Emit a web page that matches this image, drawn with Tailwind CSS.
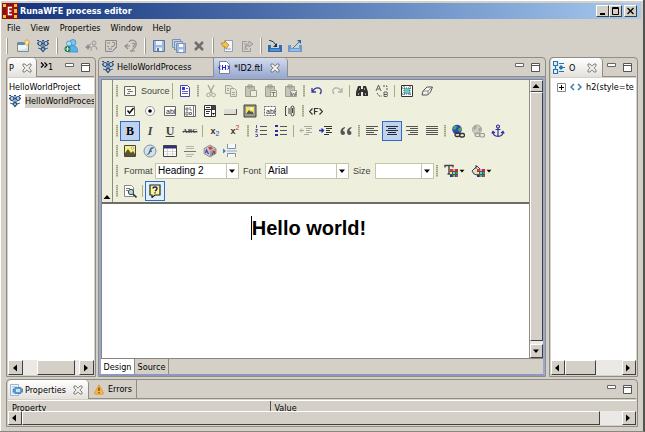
<!DOCTYPE html>
<html lang="en">
<head>
    <meta charset="UTF-8">
    <meta name="viewport" content="width=device-width, initial-scale=1.0">
    <title>RunaWFE process editor</title>
    <script src="https://cdn.jsdelivr.net/npm/@tailwindcss/browser@4"></script>
</head>
<body class="h-screen overflow-hidden bg-[#d4d0c8] font-['DejaVu_Sans_Condensed','DejaVu_Sans',sans-serif] text-[9px] leading-3 text-black">

<!-- icon sprite -->
<svg class="hidden" xmlns="http://www.w3.org/2000/svg">
    <symbol id="close" viewBox="0 0 10 10"><path d="M1 1h2l2 2.2L7 1h2v2L6.8 5 9 7v2H7L5 6.8 3 9H1V7l2.2-2L1 3z" fill="#f4f3f0" stroke="#666" stroke-width=".8"/></symbol>
    <symbol id="minview" viewBox="0 0 10 5"><path d="M.5 .5h8v3h-8z" fill="#fff" stroke="#666"/></symbol>
    <symbol id="maxview" viewBox="0 0 9 9"><path d="M.5 .5h8v8h-8z" fill="#fff" stroke="#555"/><path d="M0 2.500h9" stroke="#555"/></symbol>
    <symbol id="arrow-left" viewBox="0 0 10 10"><path d="M3 5l4-3.500v7z"/></symbol>
    <symbol id="arrow-right" viewBox="0 0 10 10"><path d="M7 5L3 1.500v7z"/></symbol>
    <symbol id="arrow-up" viewBox="0 0 10 10"><path d="M5 3l3.500 4h-7z"/></symbol>
    <symbol id="arrow-down" viewBox="0 0 10 10"><path d="M5 7L2 3.500h6z"/></symbol>
    <symbol id="process" viewBox="0 0 14 14">
        <path d="M1 4.500h12M7 2v10M4 6l3 4 3-4M2 9l3 1M12 9l-3 1" stroke="#3a6594" fill="none"/>
        <g fill="#b9d3ea" stroke="#2a4f7a" stroke-width="1.200"><circle cx="4" cy="4.500" r="2"/><circle cx="10" cy="4.500" r="2"/><path d="M7 8l2 2-2 2.500L5 10z"/></g>
        <path d="M1 1.500h2M11 1.500h2M6 1.500h2" stroke="#2a4f7a"/>
    </symbol>
    <symbol id="newproject" viewBox="0 0 14 14">
        <path d="M1.500 3.500h11v9h-11z" fill="#eef6fb" stroke="#8a8878"/><path d="M2 4h7v2H2z" fill="#4d8fd0"/><path d="M2 10q6 2 10-3v5H2z" fill="#cfe3f2"/>
        <path d="M11 0v7M7.500 3.500h6.500M8.500 1l5 5M13.500 1l-5 5" stroke="#e9a820"/><circle cx="11" cy="3.500" r="1.300" fill="#fff7c0"/>
    </symbol>
    <symbol id="users" viewBox="0 0 14 14">
        <circle cx="9" cy="3.500" r="3" fill="#7cc4ee" stroke="#2b87c4" stroke-width=".7"/><circle cx="5" cy="4.500" r="2.500" fill="#a9dcf5" stroke="#2b87c4" stroke-width=".7"/>
        <path d="M4 13q-1-6 5-6.500 5 .5 4.800 6.500z" fill="#58b4e8" stroke="#2b87c4" stroke-width=".7"/><circle cx="3.500" cy="10" r="3" fill="#207a50"/><path d="M3.500 8v4M1.500 10h4" stroke="#d2f4dc"/>
    </symbol>
    <symbol id="adduser" viewBox="0 0 14 14" fill="none" stroke="#999"><circle cx="10" cy="4" r="2"/><path d="M7 12q0-5 3-5t3 4M4 5v6M1 8h6M5 6l2-1"/><circle cx="4" cy="8" r="1.500" fill="#888"/></symbol>
    <symbol id="board" viewBox="0 0 14 14" fill="none" stroke="#8c8c8c"><path d="M1.500 1.500h11v6l-4 5h-7zM3 4h3M8 3l3 1-1 3-3 1M3 7l2 1M4 10h4M9 12l4-4"/></symbol>
    <symbol id="userundo" viewBox="0 0 14 14" fill="none" stroke="#909090"><path d="M5 3q2-3 6-1 3 4-1 7l-3 4M1 7h5M4 5L1 7l3 3M8 4l3 1-2 3M6 12h5" stroke-width="1.200"/></symbol>
    <symbol id="save" viewBox="0 0 14 14"><path d="M1.500 1.500h11v11h-11z" fill="#9fb8db" stroke="#5877a8"/><path d="M4 2h6v4H4zM4 8.500h6V12H4z" fill="#eef3fa"/><path d="M5 9h2v3H5z" fill="#5877a8"/></symbol>
    <symbol id="saveall" viewBox="0 0 14 14" fill="#c5d4e8" stroke="#7690b8"><path d="M.5 .5h8v8h-8z"/><path d="M2.500 2.500h8v8h-8z"/><path d="M4.500 4.500h9v9h-9z" fill="#9fb8db"/><path d="M7 5h4v3H7zM7 10.500h4V13H7z" fill="#fff" stroke="none"/></symbol>
    <symbol id="delete" viewBox="0 0 14 14"><path d="M3 3l8 8M11 3l-8 8" stroke="#707070" stroke-width="2.600"/></symbol>
    <symbol id="import" viewBox="0 0 14 14"><path d="M4.500 1.500h8v11h-8z" fill="#f2f5fa" stroke="#8fa3bd"/><path d="M6 10h5" stroke="#8fa3bd"/><path d="M1 4h3l1-2 4 4-3 4-1-2q-3 0-4-4z" fill="#f5c04a" stroke="#b7851f" stroke-width=".8"/></symbol>
    <symbol id="export" viewBox="0 0 14 14" fill="none" stroke="#999"><path d="M7 2.500H2.500v10h8V9M4 5h2M4 10h4"/><path d="M5 9q0-4 4-5V2l4 3-4 3V6.500Q6 6.500 5 9z" fill="#c4c2bd"/></symbol>
    <symbol id="trayin" viewBox="0 0 14 12"><path d="M0 5h3v3h8V5h3v7H0z" fill="#2f6db5"/><path d="M2 10h10" stroke="#78b7ea"/><path d="M1 0q5 1 7 5" stroke="#234" fill="none"/><path d="M9 3v4H5z" fill="#136"/></symbol>
    <symbol id="trayout" viewBox="0 0 14 12"><path d="M0 5h3v3h8V5h3v7H0z" fill="#6c9bd0"/><path d="M2 10h10" stroke="#c4dcf2"/><path d="M5 8l6-6" stroke="#357ab8" fill="none"/><path d="M9 0h4v4z" fill="#2667a5"/></symbol>
    <symbol id="ftl" viewBox="0 0 12 13"><path d="M1.500 .5h7l3 3v9h-10z" fill="#fff" stroke="#7a7f9c"/><path d="M4.500 4v5M7.500 4v5M5 6.500h2M2.500 4.500L.8 6.500l1.700 2M9.500 4.500l1.700 2-1.700 2" stroke="#2a2ab8" fill="none" stroke-width="1.100"/></symbol>
    <symbol id="outline" viewBox="0 0 12 13" fill="#eaf5fd" stroke="#1e78b8"><path d="M.5 .5h4v4h-4zM.5 8.500h4v4h-4zM2.500 5v3M6 2.500h5M6 6.500h6M6 10.500h5" stroke-width="1.200"/><path d="M7 5h2v3H7z" fill="#1e78b8"/></symbol>
    <symbol id="props" viewBox="0 0 13 12"><path d="M.5 .5h8v11h-8z" fill="#eef4fb" stroke="#9db4d0"/><path d="M2 3h5M2 9h5" stroke="#9db4d0"/><path d="M3 5h2V3.500h6V5h2v3h-2v1.500H5V8H3z" fill="#5c9bd5" stroke="#3b78b5" stroke-width=".7"/><path d="M6 5h4v3H6z" fill="#cbe4f8"/></symbol>
    <symbol id="warn" viewBox="0 0 10 11"><path d="M5 .7L9.500 9q0 1.300-1 1.300h-7q-1 0-1-1.300z" fill="#f6b53c" stroke="#d9983c" stroke-width=".8"/><path d="M5 3.500v3.500M5 8v1.300" stroke="#6b3f00" stroke-width="1.200"/></symbol>

    <symbol id="source" viewBox="0 0 14 14"><path d="M1.500 2.500h11v9h-11z" fill="#f7f7ee" stroke="#666"/><path d="M4 5.500h4M5 7.500h5M4 9.500h3" stroke="#777"/></symbol>
    <symbol id="template" viewBox="0 0 14 14"><path d="M2.500 1.500h7l2 2v9h-9z" fill="#fff" stroke="#4646aa"/><path d="M4 3h3v3H4z" fill="#3535d5"/><path d="M8 4.500h2M4 7.500h6M4 9.500h6" stroke="#5b5bd8"/></symbol>
    <symbol id="cut" viewBox="0 0 14 14" fill="none" stroke="#a5a598"><path d="M4 1l4 8M10 1L6 9" stroke-width="1.300"/><circle cx="4.500" cy="11" r="1.800"/><circle cx="9.500" cy="11" r="1.800"/></symbol>
    <symbol id="copy" viewBox="0 0 14 14" fill="#e6e7d6" stroke="#a5a598"><path d="M1.500 1.500h5l2 2v6h-7z"/><path d="M6.500 4.500h4l2 2v6h-6zM8 8.500h3M8 10.500h3M3 4.500h2M3 6.500h2"/></symbol>
    <symbol id="paste" viewBox="0 0 14 14" fill="#c5c6b6" stroke="#a0a092"><path d="M1.500 2.500h9v10h-9zM4 1h4v3H4z"/><path d="M6.500 6.500h6v6h-6z" fill="#eeeede"/></symbol>
    <symbol id="undo" viewBox="0 0 14 14" fill="none" stroke="#3a3a9c"><path d="M2 4v4h4M2.500 7.500Q5 3 9 4q4 2 1 6" stroke-width="1.300"/></symbol>
    <symbol id="redo" viewBox="0 0 14 14" fill="none" stroke="#b2b2a5"><path d="M12 4v4H8M11.500 7.500Q9 3 5 4q-4 2-1 6" stroke-width="1.300"/></symbol>
    <symbol id="find" viewBox="0 0 14 14" fill="#333"><path d="M3 2h3v3h2V2h3l2 6v4H8V8H6v4H1V8z"/><path d="M3.500 9v2M10.500 9v2M4.500 4v2M9.500 4v2" stroke="#999"/></symbol>
    <symbol id="replace" viewBox="0 0 14 14" fill="none" stroke="#555"><path d="M1 7l2.500-6L6 7M2 5h3M9 8h3q1 1 0 2.500H9zM9 10.500h3q1 1 0 2H9z" stroke-width=".9"/><path d="M8 2h4v4M2 9l2 3h3" stroke-dasharray="2 1"/></symbol>
    <symbol id="selectall" viewBox="0 0 14 14"><path d="M1.500 1.500h11v11h-11z" fill="#fff" stroke="#333"/><path d="M4 4h6v6H4z" fill="#6cc8c2"/><path d="M4 2v10M10 2v10M2 4h10M2 10h10" stroke="#356" stroke-dasharray="1 1"/></symbol>
    <symbol id="eraser" viewBox="0 0 14 14"><path d="M7 3h5.500l-2 5-3 3H2l1-4z" fill="#f4f4ee" stroke="#555"/><path d="M3 7h5l4-4M8 7v4" stroke="#777" stroke-width=".8" fill="none"/></symbol>

    <symbol id="checkbox" viewBox="0 0 14 14"><path d="M2.500 2.500h9v9h-9z" fill="#fff" stroke="#666"/><path d="M4.500 6.500l2 2.500 4-5" fill="none" stroke="#111" stroke-width="1.600"/></symbol>
    <symbol id="radio" viewBox="0 0 14 14"><circle cx="7" cy="7" r="4.500" fill="#fff" stroke="#999"/><circle cx="7" cy="7" r="1.800"/></symbol>
    <symbol id="abl" viewBox="0 0 14 14"><path d="M1.500 2.500h11v9h-11z" fill="#fff" stroke="#666"/></symbol>
    <symbol id="textarea" viewBox="0 0 14 14"><path d="M1.500 1.500h11v11h-11z" fill="#fff" stroke="#666"/><path d="M10.500 2v10M3 4h2v2H3zM7 3v3h2M3 8h2v3H3zM6.500 8.500h2v2h-2z" stroke="#555" stroke-width=".8" fill="none"/></symbol>
    <symbol id="select" viewBox="0 0 14 14"><path d="M1.500 1.500h11v11h-11zM2 5.500h10M8.500 2v10" fill="#fff" stroke="#333"/><path d="M3 3.500h4M3 7.500h4M3 9.500h3" stroke="#333"/><path d="M9 2h3v3H9z" fill="#444"/><path d="M9 9h3l-1.500 2z"/></symbol>
    <symbol id="button" viewBox="0 0 14 14"><path d="M1 5h12v5H1z" fill="#ddddd4"/><path d="M1 10.500h12.500V5" fill="none" stroke="#555"/></symbol>
    <symbol id="imgbtn" viewBox="0 0 14 14"><path d="M1 1h12v12H1z" fill="#9b9b8c" stroke="#444"/><path d="M3 3h8v7H3z" fill="#f6e85f"/><path d="M3 10l3-4 2 2 1-1 2 3z" fill="#555"/><circle cx="8.500" cy="4.800" r="1" fill="#fff"/></symbol>
    <symbol id="hiddenfield" viewBox="0 0 14 14"><path d="M1.500 2.500h11v9h-11z" fill="#fff" stroke="#666" stroke-dasharray="2 1"/></symbol>
    <symbol id="attach" viewBox="0 0 14 14" fill="none" stroke="#444"><path d="M4 2.500H2.500v9H4M6 4v6M8 10V4q0-2 1.500-2T11 4v6q0 2-1.500 2T8 10M9.500 4v5"/></symbol>
    <symbol id="freemarker" viewBox="0 0 14 14" fill="none" stroke="#333"><path d="M3.500 4.500L.5 7.500l3 3M10.500 4.500l3 3-3 3M5.500 10.500v-6h4M5.500 7.500h3" stroke-width="1.200"/></symbol>

    <symbol id="ol" viewBox="0 0 14 14"><path d="M6 2.500h7M6 6.500h7M6 10.500h7" stroke="#555"/><path d="M2.500 1v3M1.500 5.500h2l-2 2.500h2M1.500 10.500h2v2h-2" stroke="#2c2c9a" stroke-width=".8" fill="none"/></symbol>
    <symbol id="ul" viewBox="0 0 14 14"><path d="M6 2.500h7M6 6.500h7M6 10.500h7" stroke="#555"/><path d="M1 1h3v2H1zM1 6h3v2H1zM1 10h3v2H1z" fill="#2c2c9a"/></symbol>
    <symbol id="outdent" viewBox="0 0 14 14"><path d="M5 2.500h8M7 4.500h6M7 6.500h4M7 8.500h6M5 10.500h5" stroke="#aaa99c"/><path d="M5 6.500H1M3 4.500l-2 2 2 2" stroke="#aaa99c" fill="none"/></symbol>
    <symbol id="indent" viewBox="0 0 14 14"><path d="M5 2.500h8M7 4.500h6M7 6.500h4M7 8.500h6M5 10.500h5" stroke="#333" stroke-width="1.200"/><path d="M0 6.500h4M2.500 4.500l2 2-2 2" stroke="#2c2cb0" fill="none" stroke-width="1.300"/></symbol>
    <symbol id="quote" viewBox="0 0 14 14" fill="#555"><path d="M6 3Q1 4 1.500 9q.5 2 2.500 2t2-2-2-2.200Q4 5 6 4zM12.500 3Q7.500 4 8 9q.5 2 2.500 2t2-2-2-2.200q0-1.800 2-2.800z"/></symbol>
    <symbol id="left" viewBox="0 0 14 14" stroke="#555"><path d="M1 2.500h12M1 4.500h8M1 6.500h12M1 8.500h8M1 10.500h11"/></symbol>
    <symbol id="center" viewBox="0 0 14 14" stroke="#222b3b"><path d="M1 2.500h12M3 4.500h8M1 6.500h12M3 8.500h8M2 10.500h10"/></symbol>
    <symbol id="right" viewBox="0 0 14 14" stroke="#555"><path d="M1 2.500h12M5 4.500h8M1 6.500h12M5 8.500h8M3 10.500h10"/></symbol>
    <symbol id="justify" viewBox="0 0 14 14" stroke="#555"><path d="M1 2.500h12M1 4.500h12M1 6.500h12M1 8.500h12M1 10.500h12"/></symbol>
    <symbol id="link" viewBox="0 0 14 14"><circle cx="6" cy="5.500" r="4.800" fill="#3048b8"/><path d="M3 2q3-1 3 1L4 6 2 5zM7 5l3-2 .5 3L8 8z" fill="#45b04d"/><g fill="none" stroke="#333" stroke-width="1.300"><rect x="4" y="9" width="5" height="3.500" rx="1.700"/><rect x="8.500" y="9.500" width="5" height="3.500" rx="1.700"/></g></symbol>
    <symbol id="unlink" viewBox="0 0 14 14"><circle cx="6" cy="5.500" r="4.500" fill="#cfcfc0" stroke="#aaa"/><path d="M3 2q3-1 3 1L4 6 2 5zM7 5l3-2 .5 3L8 8z" fill="#aaa99c"/><g fill="none" stroke="#999" stroke-width="1.200"><rect x="4" y="9" width="5" height="3.500" rx="1.700"/><rect x="8.500" y="9.500" width="5" height="3.500" rx="1.700"/></g></symbol>
    <symbol id="anchor" viewBox="0 0 14 14" fill="none" stroke="#33339c" stroke-width="1.200"><circle cx="7" cy="2.500" r="1.500"/><path d="M7 4v8.500M4.500 5.500h5M2 8q0 4 5 4.500Q12 12 12 8M.8 9.500L2 7.500l2 1.500M13.200 9.500L12 7.500 10 9"/></symbol>

    <symbol id="image" viewBox="0 0 14 14"><path d="M1.500 1.500h11v11h-11z" fill="#f5ef7c" stroke="#444"/><path d="M2 12V9l3-4 3 4 2-2 2 3v2z" fill="#5a5430"/><circle cx="9.500" cy="4" r="1.200" fill="#fff" stroke="#776" stroke-width=".5"/></symbol>
    <symbol id="flash" viewBox="0 0 14 14"><circle cx="7" cy="7" r="6" fill="#d5e0e8" stroke="#8393a2"/><path d="M10.500 3Q7 3 6.500 6T3.500 11q3 0 4-3h1.500V6.500H8Q8.500 4.500 10.500 4.500z" fill="#4c6f92"/></symbol>
    <symbol id="table" viewBox="0 0 14 14"><path d="M.5 1.500h13v11H.5z" fill="#fff" stroke="#444"/><path d="M1 2h12v2.500H1z" fill="#303078"/><path d="M1 7.500h12M1 10h12M4.500 5v7M9.500 5v7" stroke="#c5c5c5" stroke-width=".7"/></symbol>
    <symbol id="hr" viewBox="0 0 14 14" stroke="#b5b4a7"><path d="M3 2.500h8M3 4.500h8M3 10.500h8M3 12.500h6"/><path d="M1 7.500h12" stroke="#777"/></symbol>
    <symbol id="symbols" viewBox="0 0 14 14"><path d="M7 1l6 3.500v5L7 13 1 9.500v-5z" fill="#c2c2ca" stroke="#777" stroke-width=".7"/><path d="M7 7v6l6-3.500v-5z" fill="#99a"/><path d="M5 3.500l3-1 2 2-3 1.500z" fill="#d33"/><path d="M2.500 9l1-3 2 4" stroke="#5a3ab0" fill="none" stroke-width="1.200"/><path d="M9 11l2-4 1 3" stroke="#933" fill="none"/></symbol>
    <symbol id="pagebreak" viewBox="0 0 14 14"><path d="M4.500 0v4.500h8V0M4.500 13V9.500h8V13" fill="#f4f8fc" stroke="#8291a8"/><path d="M4 7h10" stroke="#8fabd0"/><path d="M0 4.500L3 7 0 9.500z" fill="#4c7cc4"/></symbol>
    <symbol id="palette" viewBox="0 0 8 8"><path d="M0 0h8v8H0z" fill="#555"/><path d="M0 0h3v2H0z" fill="#e33"/><path d="M3 0h2v2H3z" fill="#e8e"/><path d="M5 0h3v2H5z" fill="#d22"/><path d="M0 3h2v2H0z" fill="#fe3"/><path d="M3 3h2v2H3z" fill="#4df"/><path d="M6 3h2v2H6z" fill="#2a3"/><path d="M0 6h2v2H0z" fill="#22c"/><path d="M3 6h2v2H3z" fill="#3c5"/><path d="M6 6h2v2H6z" fill="#c2c"/></symbol>
    <symbol id="textcolor" viewBox="0 0 14 14"><path d="M1 3.500V1.500h8v2M5 2v8M3.500 10h3" stroke="#444" stroke-width="1.400" fill="none"/><use href="#palette" x="6" y="5" width="8" height="8"/></symbol>
    <symbol id="bgcolor" viewBox="0 0 14 14"><path d="M1 7l5-5 4 4-4 5-3-1zM5 5V1" fill="#ddd" stroke="#444"/><use href="#palette" x="6" y="5" width="8" height="8"/></symbol>
    <symbol id="preview" viewBox="0 0 14 14"><path d="M1.500 1.500h7l2 2v9h-9z" fill="#fff" stroke="#888"/><path d="M3 4.500h4M3 6.500h2" stroke="#777"/><circle cx="8" cy="8" r="2.700" fill="#a9d8dc" stroke="#444"/><path d="M10 10l3.500 3.500" stroke="#333" stroke-width="1.600"/></symbol>
    <symbol id="help" viewBox="0 0 14 14"><path d="M2 1h10v10H7l-3 2.500V11H2z" fill="#fdf78e" stroke="#222" stroke-width="1.200"/><path d="M5 4.500Q5 3 7 3t2 1.500T7 7M7 8.300v1.200" fill="none" stroke="#1a1a88" stroke-width="1.400"/></symbol>
</svg>

<div class="flex h-full flex-col border-r-2 border-b border-[#8a877f] border-r-[#55534f] px-1 pt-[3px] pb-1 shadow-[inset_1px_1px_0_#fff]">

    <!-- title bar -->
    <header class="-mx-[2px] flex h-4 items-center bg-linear-to-r from-[#12307a] to-[#a6caf0] pr-1">
        <svg class="mr-[2px] size-4" viewBox="0 0 16 16"><path d="M0 0h16v16H0z" fill="#8d1111"/><path d="M1 1h3v3H1zM12 1h3v3h-3zM1 12h3v3H1zM12 12h3v3h-3zM12 6h3v4h-3z" fill="#eac53c"/><path d="M4 3h8v10H4z" fill="#a91212"/><path d="M10 4.500H6.500v7H10M6.500 8H9.500" fill="none" stroke="#fff" stroke-width="1.400"/></svg>
        <h1 class="flex-1 font-bold text-white">RunaWFE process editor</h1>
        <button aria-label="Minimize" class="h-3 w-[13px] border border-[#fff] border-r-[#404040] border-b-[#404040] bg-[#d4d0c8]"><svg viewBox="0 0 11 10" class="h-[10px] w-[11px]"><path d="M3 7h5v2H3z"/></svg></button>
        <button aria-label="Maximize" class="h-3 w-[13px] border border-[#fff] border-r-[#404040] border-b-[#404040] bg-[#d4d0c8]"><svg viewBox="0 0 11 10" class="h-[10px] w-[11px]" fill="none" stroke="#000"><path d="M2.500 1.500h6v7h-6zM2 2.500h7"/></svg></button>
        <button aria-label="Close" class="ml-[2px] h-3 w-[13px] border border-[#fff] border-r-[#404040] border-b-[#404040] bg-[#d4d0c8]"><svg viewBox="0 0 11 10" class="h-[10px] w-[11px]" stroke="#000" stroke-width="1.300"><path d="M2.500 2l6 6M8.500 2l-6 6"/></svg></button>
    </header>

    <!-- menu -->
    <nav class="flex h-[17px] items-center gap-[10px] px-[3px]">
        <button>File</button>
        <button>View</button>
        <button>Properties</button>
        <button>Window</button>
        <button>Help</button>
    </nav>

    <!-- main toolbar -->
    <div class="flex h-5 shrink-0 items-center">
        <span class="mx-[2px] h-4 w-[2px] border-l border-white bg-[#9a978f]"></span>
        <button aria-label="New project" class="ml-[6px] w-5"><svg class="size-[14px]"><use href="#newproject"/></svg></button>
        <button aria-label="New process" class="w-5"><svg class="size-[14px]"><use href="#process"/></svg></button>
        <span class="mr-[6px] h-4 w-[2px] border-l border-white bg-[#9a978f]"></span>
        <button aria-label="Roles" class="w-5"><svg class="size-[14px]"><use href="#users"/></svg></button>
        <button aria-label="Add role" class="w-5"><svg class="size-[14px]"><use href="#adduser"/></svg></button>
        <button aria-label="Edit board" class="w-5"><svg class="size-[14px]"><use href="#board"/></svg></button>
        <button aria-label="Revert role" class="w-5"><svg class="size-[14px]"><use href="#userundo"/></svg></button>
        <span class="mr-[6px] h-4 w-[2px] border-l border-white bg-[#9a978f]"></span>
        <button aria-label="Save" class="w-5"><svg class="size-[14px]"><use href="#save"/></svg></button>
        <button aria-label="Save all" class="w-5"><svg class="size-[14px]"><use href="#saveall"/></svg></button>
        <button aria-label="Delete" class="w-5"><svg class="size-[14px]"><use href="#delete"/></svg></button>
        <span class="mr-[6px] h-4 w-[2px] border-l border-white bg-[#9a978f]"></span>
        <button aria-label="Import" class="w-5"><svg class="size-[14px]"><use href="#import"/></svg></button>
        <button aria-label="Export" class="w-5"><svg class="size-[14px]"><use href="#export"/></svg></button>
        <span class="mr-[6px] h-4 w-[2px] border-l border-white bg-[#9a978f]"></span>
        <button aria-label="Load" class="w-5"><svg class="h-3 w-[14px]"><use href="#trayin"/></svg></button>
        <button aria-label="Unload" class="w-5"><svg class="h-3 w-[14px]"><use href="#trayout"/></svg></button>
    </div>

    <main class="flex min-h-0 flex-1 gap-[2px] pt-px pr-px pl-[2px]">

        <!-- project explorer -->
        <section class="flex w-[90px] shrink-0 flex-col rounded-t border border-[#908d86] p-px pt-0">
            <div class="flex h-[19px] shrink-0">
                <button class="flex w-[29px] items-center gap-2 rounded-t border-r border-[#908d86] bg-linear-to-b from-white to-[#e4e1dc] pl-px">P <svg class="size-[10px]"><use href="#close"/></svg></button>
                <div class="flex flex-1 items-center border-b border-[#908d86] pr-1 pl-[3px]">
                    <button class="mr-auto flex items-center"><svg class="mb-1 h-[6px] w-2" viewBox="0 0 8 6" fill="none" stroke="#000" stroke-width="1.200"><path d="M1 .5L3.500 3 1 5.500M4.500 .5L7 3 4.500 5.500"/></svg><span>1</span></button>
                    <button aria-label="Minimize view" class="mr-[6px] mb-1"><svg class="h-[5px] w-[10px]"><use href="#minview"/></svg></button>
                    <button aria-label="Maximize view"><svg class="size-[9px]"><use href="#maxview"/></svg></button>
                </div>
            </div>
            <ul class="mt-px min-h-0 flex-1 overflow-hidden bg-white pt-[2px] whitespace-nowrap">
                <li class="flex h-[14px] items-center pl-px">HelloWorldProject</li>
                <li class="flex h-[14px] items-center gap-[3px]"><svg class="size-[14px] shrink-0"><use href="#process"/></svg><span class="bg-[#d4d0c8] py-px">HelloWorldProcess</span></li>
            </ul>
            <div class="flex h-[15px] shrink-0 bg-[#ebe9e5]">
                <button aria-label="Scroll left" class="w-[15px] border border-white border-r-[#404040] border-b-[#404040] bg-[#d4d0c8] pl-px"><svg class="size-[10px]"><use href="#arrow-left"/></svg></button>
                <span class="ml-[14px] w-[38px] border border-white border-r-[#404040] border-b-[#404040] bg-[#d4d0c8]"></span>
                <button aria-label="Scroll right" class="ml-auto w-[15px] border border-white border-r-[#404040] border-b-[#404040] bg-[#d4d0c8] pl-px"><svg class="size-[10px]"><use href="#arrow-right"/></svg></button>
            </div>
        </section>

        <!-- editor -->
        <section class="flex min-w-0 flex-1 flex-col rounded-t border border-[#908d86]">
            <div class="flex h-[19px] shrink-0">
                <button class="flex w-[115px] items-center gap-[2px] border-r border-b border-[#908d86] pl-[2px]"><svg class="size-[14px]"><use href="#process"/></svg>HelloWorldProcess</button>
                <button class="flex w-[74px] items-center gap-1 rounded-t border-r border-[#908d86] bg-linear-to-b from-[#d3dbee] to-[#99a9d0] pl-1"><svg class="h-[13px] w-3"><use href="#ftl"/></svg><span class="mr-[3px]">*ID2.ftl</span><svg class="size-[10px]"><use href="#close"/></svg></button>
                <div class="flex flex-1 items-center justify-end border-b border-[#908d86] pr-[5px]">
                    <button aria-label="Minimize view" class="mr-[6px] mb-1"><svg class="h-[5px] w-[10px]"><use href="#minview"/></svg></button>
                    <button aria-label="Maximize view"><svg class="size-[9px]"><use href="#maxview"/></svg></button>
                </div>
            </div>
            <div class="flex min-h-0 flex-1 flex-col border-2 border-[#99a9d0] border-b-[#8c99bd]">
                <div class="flex min-h-0 flex-1 border-t border-b border-l border-[#88857e]">
                    <div class="flex min-w-0 flex-1 flex-col bg-white">

                        <!-- rich text toolbar -->
                        <div class="flex shrink-0 border-b-2 border-[#6d6e66] bg-[#efefde] font-['Liberation_Sans',sans-serif] text-[9px] text-[#444]">
                            <button aria-label="Collapse toolbar" class="flex w-[11px] items-end border-r border-[#8b8b7e]"><svg class="size-[10px]"><use href="#arrow-up"/></svg></button>
                            <div class="flex-1 pt-px pb-px pl-px">
                                <div class="flex h-5 items-center">
                                    <span class="mx-[2px] h-3 w-[2px] bg-[repeating-linear-gradient(#a8a287_0_1px,#cdc8ae_1px_2px)]"></span>
                                    <button class="flex w-[50px] items-center gap-1 pl-[3px]"><svg class="size-[14px]"><use href="#source"/></svg>Source</button>
                                    <span class="mx-[2px] h-4 w-px bg-[#a9ad86]"></span>
                                    <button aria-label="Templates" class="flex size-5 items-center justify-center"><svg class="size-[14px]"><use href="#template"/></svg></button>
                                    <span class="mx-[2px] h-3 w-[2px] bg-[repeating-linear-gradient(#a8a287_0_1px,#cdc8ae_1px_2px)]"></span>
                                    <button aria-label="Cut" class="flex size-5 items-center justify-center"><svg class="size-[14px]"><use href="#cut"/></svg></button>
                                    <button aria-label="Copy" class="flex size-5 items-center justify-center"><svg class="size-[14px]"><use href="#copy"/></svg></button>
                                    <button aria-label="Paste" class="flex size-5 items-center justify-center"><svg class="size-[14px]"><use href="#paste"/></svg></button>
                                    <button aria-label="Paste as text" class="flex size-5 items-center justify-center"><svg class="size-[14px]"><use href="#paste"/><path d="M7.500 8.500h4M9.500 8.500v3.500" stroke="#777"/></svg></button>
                                    <button aria-label="Paste from Word" class="flex size-5 items-center justify-center"><svg class="size-[14px]" fill="none"><use href="#paste"/><path d="M7 8l1 4 1.500-3 1.500 3 1-4" stroke="#777"/></svg></button>
                                    <span class="mx-[2px] h-3 w-[2px] bg-[repeating-linear-gradient(#a8a287_0_1px,#cdc8ae_1px_2px)]"></span>
                                    <button aria-label="Undo" class="flex size-5 items-center justify-center"><svg class="size-[14px]"><use href="#undo"/></svg></button>
                                    <button aria-label="Redo" class="flex size-5 items-center justify-center"><svg class="size-[14px]"><use href="#redo"/></svg></button>
                                    <span class="mx-[2px] h-3 w-px bg-[#a9ad86]"></span>
                                    <button aria-label="Find" class="flex size-5 items-center justify-center"><svg class="size-[14px]"><use href="#find"/></svg></button>
                                    <button aria-label="Replace" class="flex size-5 items-center justify-center"><svg class="size-[14px]"><use href="#replace"/></svg></button>
                                    <span class="mx-[2px] h-3 w-px bg-[#a9ad86]"></span>
                                    <button aria-label="Select all" class="flex size-5 items-center justify-center"><svg class="size-[14px]"><use href="#selectall"/></svg></button>
                                    <button aria-label="Remove format" class="flex size-5 items-center justify-center"><svg class="size-[14px]"><use href="#eraser"/></svg></button>
                                </div>
                                <div class="flex h-5 items-center">
                                    <span class="mx-[2px] h-3 w-[2px] bg-[repeating-linear-gradient(#a8a287_0_1px,#cdc8ae_1px_2px)]"></span>
                                    <button aria-label="Checkbox" class="flex size-5 items-center justify-center"><svg class="size-[14px]"><use href="#checkbox"/></svg></button>
                                    <button aria-label="Radio button" class="flex size-5 items-center justify-center"><svg class="size-[14px]"><use href="#radio"/></svg></button>
                                    <button aria-label="Text field" class="flex size-5 items-center justify-center"><svg class="size-[14px]"><use href="#abl"/><text x="3" y="10" font-size="7" fill="#222">abl</text></svg></button>
                                    <button aria-label="Text area" class="flex size-5 items-center justify-center"><svg class="size-[14px]"><use href="#textarea"/></svg></button>
                                    <button aria-label="Selection field" class="flex size-5 items-center justify-center"><svg class="size-[14px]"><use href="#select"/></svg></button>
                                    <button aria-label="Button" class="flex size-5 items-center justify-center"><svg class="size-[14px]"><use href="#button"/></svg></button>
                                    <button aria-label="Image button" class="flex size-5 items-center justify-center"><svg class="size-[14px]"><use href="#imgbtn"/></svg></button>
                                    <button aria-label="Hidden field" class="flex size-5 items-center justify-center"><svg class="size-[14px]"><use href="#hiddenfield"/><text x="3" y="10" font-size="7" fill="#222">abl</text></svg></button>
                                    <button aria-label="File" class="flex size-5 items-center justify-center"><svg class="size-[14px]"><use href="#attach"/></svg></button>
                                    <span class="mx-[2px] h-3 w-[2px] bg-[repeating-linear-gradient(#a8a287_0_1px,#cdc8ae_1px_2px)]"></span>
                                    <button aria-label="Freemarker tag" class="flex size-5 items-center justify-center"><svg class="size-[14px]"><use href="#freemarker"/></svg></button>
                                </div>
                                <div class="flex h-5 items-center">
                                    <span class="mx-[2px] h-3 w-[2px] bg-[repeating-linear-gradient(#a8a287_0_1px,#cdc8ae_1px_2px)]"></span>
                                    <button class="size-5 border border-[#316ac5] bg-[#c1d2ee] font-['Liberation_Serif',serif] text-xs font-bold text-black">B</button>
                                    <button class="size-5 font-['Liberation_Serif',serif] text-xs font-bold text-[#444] italic">I</button>
                                    <button class="size-5 font-['Liberation_Serif',serif] text-xs font-bold text-[#444] underline">U</button>
                                    <button class="flex size-5 items-center justify-center font-['Liberation_Serif',serif] text-[7px] font-bold text-[#444] line-through">ABC</button>
                                    <span class="mx-[2px] h-3 w-px bg-[#a9ad86]"></span>
                                    <button aria-label="Subscript" class="flex size-5 items-center justify-center font-bold text-[#333]">x<span class="mt-[6px] text-[7px] font-normal text-[#3a3ab5]">2</span></button>
                                    <button aria-label="Superscript" class="flex size-5 items-center justify-center font-bold text-[#333]">x<span class="mb-[6px] text-[7px] font-normal text-[#c03030]">2</span></button>
                                    <span class="mx-[2px] h-3 w-[2px] bg-[repeating-linear-gradient(#a8a287_0_1px,#cdc8ae_1px_2px)]"></span>
                                    <button aria-label="Numbered list" class="flex size-5 items-center justify-center"><svg class="size-[14px]"><use href="#ol"/></svg></button>
                                    <button aria-label="Bulleted list" class="flex size-5 items-center justify-center"><svg class="size-[14px]"><use href="#ul"/></svg></button>
                                    <span class="mx-[2px] h-3 w-px bg-[#a9ad86]"></span>
                                    <button aria-label="Outdent" class="flex size-5 items-center justify-center"><svg class="size-[14px]"><use href="#outdent"/></svg></button>
                                    <button aria-label="Indent" class="flex size-5 items-center justify-center"><svg class="size-[14px]"><use href="#indent"/></svg></button>
                                    <button aria-label="Block quote" class="flex size-5 items-center justify-center"><svg class="size-[14px]"><use href="#quote"/></svg></button>
                                    <span class="mx-[2px] h-3 w-[2px] bg-[repeating-linear-gradient(#a8a287_0_1px,#cdc8ae_1px_2px)]"></span>
                                    <button aria-label="Align left" class="flex size-5 items-center justify-center"><svg class="size-[14px]"><use href="#left"/></svg></button>
                                    <button aria-label="Align center" class="flex size-5 items-center justify-center border border-[#316ac5] bg-[#c1d2ee]"><svg class="size-[14px]"><use href="#center"/></svg></button>
                                    <button aria-label="Align right" class="flex size-5 items-center justify-center"><svg class="size-[14px]"><use href="#right"/></svg></button>
                                    <button aria-label="Justify" class="flex size-5 items-center justify-center"><svg class="size-[14px]"><use href="#justify"/></svg></button>
                                    <span class="mx-[2px] h-3 w-[2px] bg-[repeating-linear-gradient(#a8a287_0_1px,#cdc8ae_1px_2px)]"></span>
                                    <button aria-label="Link" class="flex size-5 items-center justify-center"><svg class="size-[14px]"><use href="#link"/></svg></button>
                                    <button aria-label="Unlink" class="flex size-5 items-center justify-center"><svg class="size-[14px]"><use href="#unlink"/></svg></button>
                                    <button aria-label="Anchor" class="flex size-5 items-center justify-center"><svg class="size-[14px]"><use href="#anchor"/></svg></button>
                                </div>
                                <div class="flex h-5 items-center">
                                    <span class="mx-[2px] h-3 w-[2px] bg-[repeating-linear-gradient(#a8a287_0_1px,#cdc8ae_1px_2px)]"></span>
                                    <button aria-label="Image" class="flex size-5 items-center justify-center"><svg class="size-[14px]"><use href="#image"/></svg></button>
                                    <button aria-label="Flash" class="flex size-5 items-center justify-center"><svg class="size-[14px]"><use href="#flash"/></svg></button>
                                    <button aria-label="Table" class="flex size-5 items-center justify-center"><svg class="size-[14px]"><use href="#table"/></svg></button>
                                    <button aria-label="Horizontal line" class="flex size-5 items-center justify-center"><svg class="size-[14px]"><use href="#hr"/></svg></button>
                                    <button aria-label="Special character" class="flex size-5 items-center justify-center"><svg class="size-[14px]"><use href="#symbols"/></svg></button>
                                    <button aria-label="Page break" class="flex size-5 items-center justify-center"><svg class="size-[14px]"><use href="#pagebreak"/></svg></button>
                                </div>
                                <div class="flex h-5 items-center">
                                    <span class="mx-[2px] h-3 w-[2px] bg-[repeating-linear-gradient(#a8a287_0_1px,#cdc8ae_1px_2px)]"></span>
                                    <label for="format" class="ml-1 w-[31px]">Format</label>
                                    <span class="relative">
                                        <select id="format" class="h-4 w-[84px] appearance-none border border-[#c5c5ac] bg-white pl-[2px] text-[10px] text-black"><option>Heading 2</option></select>
                                        <svg class="pointer-events-none absolute top-px right-px h-[14px] w-3 border-l border-[#c5c5ac]"><use href="#arrow-down" x="0" y="2" width="10" height="10"/></svg>
                                    </span>
                                    <label for="font" class="ml-1 w-[22px]">Font</label>
                                    <span class="relative">
                                        <select id="font" class="h-4 w-[84px] appearance-none border border-[#c5c5ac] bg-white pl-[2px] text-[10px] text-black"><option>Arial</option></select>
                                        <svg class="pointer-events-none absolute top-px right-px h-[14px] w-3 border-l border-[#c5c5ac]"><use href="#arrow-down" x="0" y="2" width="10" height="10"/></svg>
                                    </span>
                                    <label for="size" class="ml-1 w-[22px]">Size</label>
                                    <span class="relative">
                                        <select id="size" class="h-4 w-[59px] appearance-none border border-[#c5c5ac] bg-white pl-[2px] text-[10px] text-black"><option></option></select>
                                        <svg class="pointer-events-none absolute top-px right-px h-[14px] w-3 border-l border-[#c5c5ac]"><use href="#arrow-down" x="0" y="2" width="10" height="10"/></svg>
                                    </span>
                                    <span class="mx-[2px] h-3 w-[2px] bg-[repeating-linear-gradient(#a8a287_0_1px,#cdc8ae_1px_2px)]"></span>
                                    <button aria-label="Text color" class="ml-1 flex w-[27px] items-center"><svg class="size-[14px]"><use href="#textcolor"/></svg><svg class="size-2"><use href="#arrow-down"/></svg></button>
                                    <button aria-label="Background color" class="flex w-[27px] items-center"><svg class="size-[14px]"><use href="#bgcolor"/></svg><svg class="size-2"><use href="#arrow-down"/></svg></button>
                                </div>
                                <div class="flex h-5 items-center">
                                    <span class="mx-[2px] h-3 w-[2px] bg-[repeating-linear-gradient(#a8a287_0_1px,#cdc8ae_1px_2px)]"></span>
                                    <button aria-label="Preview" class="flex size-5 items-center justify-center"><svg class="size-[14px]"><use href="#preview"/></svg></button>
                                    <span class="mx-[2px] h-3 w-px bg-[#a9ad86]"></span>
                                    <button aria-label="Help" class="flex size-5 items-center justify-center border border-[#316ac5] bg-[#dff1ff]"><svg class="size-[14px]"><use href="#help"/></svg></button>
                                </div>
                            </div>
                        </div>

                        <div class="flex flex-1 justify-center pt-3 pr-[14px]">
                            <h2 class="h-6 border-l border-black font-['Liberation_Sans',sans-serif] text-xl leading-6 font-bold">Hello world!</h2>
                        </div>
                    </div>
                    <div class="flex w-[14px] shrink-0 flex-col border-l border-[#908d86] bg-[#ebe9e5]">
                        <button aria-label="Scroll up" class="h-3 border border-white border-r-[#404040] border-b-[#404040] bg-[#d4d0c8]"><svg class="size-[10px]"><use href="#arrow-up"/></svg></button>
                        <span class="flex-1 border border-white border-r-[#404040] border-b-[#404040] bg-[#d4d0c8]"></span>
                        <button aria-label="Scroll down" class="mt-[3px] h-[14px] border border-white border-r-[#404040] border-b-[#404040] bg-[#d4d0c8]"><svg class="size-[10px]"><use href="#arrow-down"/></svg></button>
                    </div>
                </div>
                <div class="flex h-[15px] shrink-0">
                    <button class="w-[33px] bg-white text-center">Design</button>
                    <button class="w-[35px] border-x border-[#908d86] text-center">Source</button>
                </div>
            </div>
        </section>

        <!-- outline -->
        <section class="ml-px flex w-[89px] shrink-0 flex-col rounded-t border border-[#908d86] p-px pt-0">
            <div class="flex h-[19px] shrink-0">
                <button class="flex w-[52px] items-center gap-1 rounded-t border-r border-[#908d86] bg-linear-to-b from-white to-[#e4e1dc] pr-[5px] pl-[2px]"><svg class="h-[13px] w-3"><use href="#outline"/></svg>O <svg class="ml-auto size-[10px]"><use href="#close"/></svg></button>
                <div class="flex flex-1 items-center justify-end border-b border-[#908d86] pr-1">
                    <button aria-label="Minimize view" class="mr-[6px] mb-1"><svg class="h-[5px] w-[10px]"><use href="#minview"/></svg></button>
                    <button aria-label="Maximize view"><svg class="size-[9px]"><use href="#maxview"/></svg></button>
                </div>
            </div>
            <ul class="mt-px min-h-0 flex-1 overflow-hidden bg-white pt-[2px] whitespace-nowrap">
                <li class="flex h-[14px] items-center pl-[6px]">
                    <svg class="size-[9px] shrink-0" viewBox="0 0 9 9"><path d="M.5 .5h8v8h-8z" fill="#fff" stroke="#888"/><path d="M2 4.500h5M4.500 2v5" stroke="#000"/></svg>
                    <svg class="mx-1 h-2 w-3 shrink-0" viewBox="0 0 12 8" fill="none" stroke="#2f78b4" stroke-width="1.400"><path d="M4 1L1 4l3 3M8 1l3 3-3 3"/></svg>
                    h2(style=te
                </li>
            </ul>
            <div class="flex h-[15px] shrink-0 bg-[#ebe9e5]">
                <button aria-label="Scroll left" class="w-[14px] border border-white border-r-[#404040] border-b-[#404040] bg-[#d4d0c8]"><svg class="size-[10px]"><use href="#arrow-left"/></svg></button>
                <span class="w-[31px] border border-white border-r-[#404040] border-b-[#404040] bg-[#d4d0c8]"></span>
                <button aria-label="Scroll right" class="ml-auto w-[14px] border border-white border-r-[#404040] border-b-[#404040] bg-[#d4d0c8]"><svg class="size-[10px]"><use href="#arrow-right"/></svg></button>
            </div>
        </section>
    </main>

    <!-- properties view -->
    <section class="mt-[2px] mr-px ml-[2px] flex h-12 shrink-0 flex-col rounded-t border border-[#908d86] p-px pt-0">
        <div class="flex h-[19px] shrink-0">
            <button class="flex w-[81px] items-center rounded-t border-r border-[#908d86] bg-linear-to-b from-white to-[#e4e1dc] pl-[2px]"><svg class="mr-[2px] h-3 w-[13px]"><use href="#props"/></svg>Properties<svg class="ml-[7px] size-[10px]"><use href="#close"/></svg></button>
            <button class="flex w-12 items-center gap-1 border-r border-b border-[#908d86] pl-[5px]"><svg class="h-[11px] w-[10px]"><use href="#warn"/></svg>Errors</button>
            <div class="flex flex-1 items-center justify-end border-b border-[#908d86] pr-1">
                <button aria-label="Minimize view" class="mr-[6px] mb-1"><svg class="h-[5px] w-[10px]"><use href="#minview"/></svg></button>
                <button aria-label="Maximize view"><svg class="size-[9px]"><use href="#maxview"/></svg></button>
            </div>
        </div>
        <div class="mt-px min-h-0 flex-1 overflow-hidden border-t border-white">
            <table class="w-full table-fixed border-collapse text-left">
                <thead>
                    <tr>
                        <th class="w-[262px] border-r border-[#555] pt-px pl-1 font-normal">Property</th>
                        <th class="pt-px pl-1 font-normal">Value</th>
                    </tr>
                </thead>
            </table>
        </div>
        <div class="flex h-[14px] shrink-0 bg-[#ebe9e5]">
            <button aria-label="Scroll left" class="w-[14px] border border-white border-r-[#404040] border-b-[#404040] bg-[#d4d0c8]"><svg class="size-[10px]"><use href="#arrow-left"/></svg></button>
            <span class="mr-[22px] flex-1 border border-white border-r-[#404040] border-b-[#404040] bg-[#d4d0c8]"></span>
            <button aria-label="Scroll right" class="w-[14px] border border-white border-r-[#404040] border-b-[#404040] bg-[#d4d0c8]"><svg class="size-[10px]"><use href="#arrow-right"/></svg></button>
        </div>
    </section>
</div>
</body>
</html>
